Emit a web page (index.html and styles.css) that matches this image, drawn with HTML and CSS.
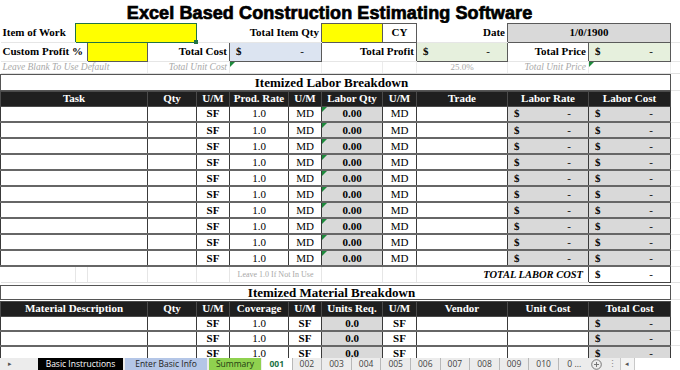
FILE: index.html
```html
<!DOCTYPE html>
<html lang="en">
<head>
  <meta charset="UTF-8">
  <title>Excel Based Construction Estimating Software</title>
  <link rel="stylesheet" href="styles.css">
</head>
<body>
  <div class="sheet">
    <table class="grid">
      <colgroup>
        <col style="width:75px"><col style="width:12px"><col style="width:60px"><col style="width:49px">
        <col style="width:33px"><col style="width:59px"><col style="width:33px"><col style="width:61px">
        <col style="width:34px"><col style="width:91px"><col style="width:81px"><col style="width:82px">
        <col style="width:10px">
      </colgroup>

      <tr class="title-row">
        <td colspan="13" class="title">Excel Based Construction Estimating Software</td>
      </tr>

      <tr class="top-row">
        <td class="lbl">Item of Work</td>
        <td colspan="3" class="yel sel"></td>
        <td colspan="3" class="lbl r">Total Item Qty</td>
        <td class="yel box"></td>
        <td class="box c lbl">CY</td>
        <td class="lbl r">Date</td>
        <td colspan="2" class="box gry c lbl">1/0/1900</td>
        <td class="strip"></td>
      </tr>

      <tr class="top-row">
        <td colspan="2" class="lbl">Custom Profit %</td>
        <td class="yel box"></td>
        <td colspan="2" class="lbl r">Total Cost</td>
        <td colspan="2" class="box blue"><div class="money"><b>$</b><span>-</span></div></td>
        <td colspan="2" class="lbl r">Total Profit</td>
        <td class="box grn"><div class="money"><b>$</b><span>-</span></div></td>
        <td class="lbl r">Total Price</td>
        <td class="box grn"><div class="money"><b>$</b><span>-</span></div></td>
        <td class="strip"></td>
      </tr>

      <tr class="hint-row">
        <td colspan="3" class="hint">Leave Blank To Use Default</td>
        <td colspan="2" class="hint r">Total Unit Cost</td>
        <td colspan="2" class="tri"></td>
        <td></td>
        <td></td>
        <td class="pct c">25.0%</td>
        <td class="hint r">Total Unit Price</td>
        <td class="tri"></td>
        <td class="strip"></td>
      </tr>

      <tr class="gap"><td colspan="13"></td></tr>
      <tr class="section-row">
        <td colspan="12" class="section">Itemized Labor Breakdown</td>
        <td class="strip"></td>
      </tr>
      <tr class="gap"><td colspan="13"></td></tr>

      <tr class="head">
        <td colspan="3">Task</td><td>Qty</td><td>U/M</td><td>Prod. Rate</td><td>U/M</td>
        <td>Labor Qty</td><td>U/M</td><td>Trade</td><td>Labor Rate</td><td>Labor Cost</td>
        <td class="strip"></td>
      </tr>

      <tr class="row">
        <td colspan="3"></td><td></td><td class="b c">SF</td><td class="c">1.0</td><td class="c">MD</td>
        <td class="gry tri b c">0.00</td><td class="c">MD</td><td></td>
        <td class="gry"><div class="money"><b>$</b><span>-</span></div></td>
        <td class="gry"><div class="money"><b>$</b><span>-</span></div></td>
        <td class="strip"></td>
      </tr>
      <tr class="row">
        <td colspan="3"></td><td></td><td class="b c">SF</td><td class="c">1.0</td><td class="c">MD</td>
        <td class="gry tri b c">0.00</td><td class="c">MD</td><td></td>
        <td class="gry"><div class="money"><b>$</b><span>-</span></div></td>
        <td class="gry"><div class="money"><b>$</b><span>-</span></div></td>
        <td class="strip"></td>
      </tr>
      <tr class="row">
        <td colspan="3"></td><td></td><td class="b c">SF</td><td class="c">1.0</td><td class="c">MD</td>
        <td class="gry tri b c">0.00</td><td class="c">MD</td><td></td>
        <td class="gry"><div class="money"><b>$</b><span>-</span></div></td>
        <td class="gry"><div class="money"><b>$</b><span>-</span></div></td>
        <td class="strip"></td>
      </tr>
      <tr class="row">
        <td colspan="3"></td><td></td><td class="b c">SF</td><td class="c">1.0</td><td class="c">MD</td>
        <td class="gry tri b c">0.00</td><td class="c">MD</td><td></td>
        <td class="gry"><div class="money"><b>$</b><span>-</span></div></td>
        <td class="gry"><div class="money"><b>$</b><span>-</span></div></td>
        <td class="strip"></td>
      </tr>
      <tr class="row">
        <td colspan="3"></td><td></td><td class="b c">SF</td><td class="c">1.0</td><td class="c">MD</td>
        <td class="gry tri b c">0.00</td><td class="c">MD</td><td></td>
        <td class="gry"><div class="money"><b>$</b><span>-</span></div></td>
        <td class="gry"><div class="money"><b>$</b><span>-</span></div></td>
        <td class="strip"></td>
      </tr>
      <tr class="row">
        <td colspan="3"></td><td></td><td class="b c">SF</td><td class="c">1.0</td><td class="c">MD</td>
        <td class="gry tri b c">0.00</td><td class="c">MD</td><td></td>
        <td class="gry"><div class="money"><b>$</b><span>-</span></div></td>
        <td class="gry"><div class="money"><b>$</b><span>-</span></div></td>
        <td class="strip"></td>
      </tr>
      <tr class="row">
        <td colspan="3"></td><td></td><td class="b c">SF</td><td class="c">1.0</td><td class="c">MD</td>
        <td class="gry tri b c">0.00</td><td class="c">MD</td><td></td>
        <td class="gry"><div class="money"><b>$</b><span>-</span></div></td>
        <td class="gry"><div class="money"><b>$</b><span>-</span></div></td>
        <td class="strip"></td>
      </tr>
      <tr class="row">
        <td colspan="3"></td><td></td><td class="b c">SF</td><td class="c">1.0</td><td class="c">MD</td>
        <td class="gry tri b c">0.00</td><td class="c">MD</td><td></td>
        <td class="gry"><div class="money"><b>$</b><span>-</span></div></td>
        <td class="gry"><div class="money"><b>$</b><span>-</span></div></td>
        <td class="strip"></td>
      </tr>
      <tr class="row">
        <td colspan="3"></td><td></td><td class="b c">SF</td><td class="c">1.0</td><td class="c">MD</td>
        <td class="gry tri b c">0.00</td><td class="c">MD</td><td></td>
        <td class="gry"><div class="money"><b>$</b><span>-</span></div></td>
        <td class="gry"><div class="money"><b>$</b><span>-</span></div></td>
        <td class="strip"></td>
      </tr>
      <tr class="row">
        <td colspan="3"></td><td></td><td class="b c">SF</td><td class="c">1.0</td><td class="c">MD</td>
        <td class="gry tri b c">0.00</td><td class="c">MD</td><td></td>
        <td class="gry"><div class="money"><b>$</b><span>-</span></div></td>
        <td class="gry"><div class="money"><b>$</b><span>-</span></div></td>
        <td class="strip"></td>
      </tr>

      <tr class="total-row">
        <td></td><td></td><td></td><td></td><td></td>
        <td colspan="2" class="note c">Leave 1.0 If Not In Use</td>
        <td></td><td></td>
        <td colspan="2" class="total-lbl r">TOTAL LABOR COST</td>
        <td class="total-box"><div class="money"><b>$</b><span>-</span></div></td>
        <td class="strip"></td>
      </tr>

      <tr class="gap gap-3"><td colspan="13"></td></tr>
      <tr class="section-row short">
        <td colspan="12" class="section">Itemized Material Breakdown</td>
        <td class="strip"></td>
      </tr>
      <tr class="gap gap-2"><td colspan="13"></td></tr>

      <tr class="head">
        <td colspan="3">Material Description</td><td>Qty</td><td>U/M</td><td>Coverage</td><td>U/M</td>
        <td>Units Req.</td><td>U/M</td><td>Vendor</td><td>Unit Cost</td><td>Total Cost</td>
        <td class="strip"></td>
      </tr>

      <tr class="row mat">
        <td colspan="3"></td><td></td><td class="b c">SF</td><td class="c">1.0</td><td class="b c">SF</td>
        <td class="gry b c">0.0</td><td class="b c">SF</td><td></td><td></td>
        <td class="gry"><div class="money"><b>$</b><span>-</span></div></td>
        <td class="strip"></td>
      </tr>
      <tr class="row mat">
        <td colspan="3"></td><td></td><td class="b c">SF</td><td class="c">1.0</td><td class="b c">SF</td>
        <td class="gry b c">0.0</td><td class="b c">SF</td><td></td><td></td>
        <td class="gry"><div class="money"><b>$</b><span>-</span></div></td>
        <td class="strip"></td>
      </tr>
      <tr class="row mat">
        <td colspan="3"></td><td></td><td class="b c">SF</td><td class="c">1.0</td><td class="b c">SF</td>
        <td class="gry b c">0.0</td><td class="b c">SF</td><td></td><td></td>
        <td class="gry"><div class="money"><b>$</b><span>-</span></div></td>
        <td class="strip"></td>
      </tr>
    </table>
  </div>

  <div class="tabs">
    <span class="nav">&#9656;</span>
    <span class="tab t-black">Basic Instructions</span>
    <span class="tab t-blue">Enter Basic Info</span>
    <span class="tab t-green">Summary</span>
    <span class="tab num active">001</span>
    <span class="tab num">002</span>
    <span class="tab num">003</span>
    <span class="tab num">004</span>
    <span class="tab num">005</span>
    <span class="tab num">006</span>
    <span class="tab num">007</span>
    <span class="tab num">008</span>
    <span class="tab num">009</span>
    <span class="tab num">010</span>
    <span class="tab num more">0 ...</span>
    <span class="add">
      <svg width="11" height="11" viewBox="0 0 11 11">
        <circle cx="5.5" cy="5.5" r="4.8" fill="none" stroke="#6a6a6a" stroke-width="0.9"/>
        <path d="M5.5 3v5M3 5.5h5" stroke="#6a6a6a" stroke-width="0.9"/>
      </svg>
    </span>
    <span class="dots">&#8942;</span>
    <span class="scroll"><span class="arrow">&#9666;</span></span>
  </div>
</body>
</html>
```

FILE: styles.css
```css
* {
  box-sizing: border-box;
}

html, body {
  margin: 0;
}

body {
  width: 680px;
  height: 370px;
  display: flex;
  flex-direction: column;
  overflow: hidden;
  background: #fff;
  font-family: "Liberation Serif", "Times New Roman", serif;
  font-size: 11px;
  color: #000;
}

.sheet {
  flex: 1;
  overflow: hidden;
}

.grid {
  border-collapse: collapse;
  table-layout: fixed;
  width: 680px;
}

.grid td {
  padding: 0 2px;
  white-space: nowrap;
  overflow: hidden;
  vertical-align: middle;
  line-height: 13px;
}

/* title */
.title-row {
  height: 23px;
}

.title {
  font-family: "Liberation Sans", Arial, sans-serif;
  font-size: 18px;
  font-weight: bold;
  letter-spacing: 0.1px;
  -webkit-text-stroke: 0.7px #000;
  text-align: center;
  vertical-align: bottom !important;
  line-height: 20px !important;
  padding-right: 24px !important;
}

/* top info block */
.top-row {
  height: 19px;
}

.top-row td {
  border-bottom: 1px solid #e6e6e6;
}

.lbl {
  font-weight: bold;
}

.r {
  text-align: right;
}

.c {
  text-align: center;
}

.b {
  font-weight: bold;
}

.yel {
  background: #ffff00;
}

.blue {
  background: #dce4f1;
}

.grn {
  background: #e6f0dd;
}

.gry {
  background: #d9d9d9;
}

.grid td.box {
  border: 1px solid #5a5a5a;
}

.grid td.sel {
  position: relative;
  border: 1px solid #217346;
  overflow: visible;
}

.sel::after {
  content: "";
  position: absolute;
  right: -2px;
  bottom: -2px;
  width: 4px;
  height: 4px;
  background: #217346;
}

.money {
  display: flex;
  justify-content: space-between;
  padding: 0 15px 0 4px;
}

.hint-row {
  height: 12px;
}

.hint-row td {
  border-right: 1px solid #ececec;
  border-bottom: 1px solid #e0e0e0;
  line-height: 10px;
}

.hint {
  font-style: italic;
  font-size: 9.5px;
  color: #a8a8a8;
}

.pct {
  font-size: 9px;
  color: #a8a8a8;
}

.grid td.tri {
  position: relative;
  overflow: visible;
}

.tri::before {
  content: "";
  position: absolute;
  top: 0;
  left: 0;
  border-top: 5px solid #1d8a3c;
  border-right: 5px solid transparent;
}

/* section captions */
.gap td {
  height: 1px;
  padding: 0;
  line-height: 0;
}

.gap-2 td {
  height: 2px;
}

.gap-3 td {
  height: 3px;
}

.section-row {
  height: 16px;
}

.section-row.short {
  height: 14px;
}

.grid td.section {
  border: 1px solid #555;
  text-align: center;
  font-size: 13px;
  font-weight: bold;
  padding-right: 10px;
}

/* table header */
.head {
  height: 15px;
}

.head td {
  background: #1f1f1f;
  color: #fff;
  font-weight: bold;
  text-align: center;
  border: 1px solid #4a4a4a;
}

.grid .head td.strip {
  background: #fff;
  border: none;
}

/* data rows */
.row {
  height: 16px;
}

.row.mat {
  height: 14px;
}

.row td {
  border: 1px solid #3a3a3a;
  border-bottom: 2px solid #666;
}

.grid .row td.strip {
  border: none;
  border-bottom: 1px solid #e4e4e4;
}

.strip {
  border-bottom: 1px solid #e6e6e6;
}

.total-row {
  height: 16px;
}

.total-row td {
  border-right: 1px solid #e6e6e6;
  border-bottom: 1px solid #e0e0e0;
}

.note {
  font-size: 8px;
  color: #a8a8a8;
}

.grid td.total-lbl {
  font-weight: bold;
  font-style: italic;
  font-size: 10.5px;
  padding-right: 5px;
  border-right: 1px solid #444;
}

.grid td.total-box {
  border: 1px solid #444;
}

/* sheet tabs */
.tabs {
  height: 12px;
  flex: none;
  display: flex;
  align-items: stretch;
  background: #ececec;
  font-family: "Open Sans", "Noto Sans", sans-serif;
  font-size: 8.5px;
  line-height: 12px;
  color: #444;
}

.nav {
  width: 38px;
  padding-left: 8px;
  font-size: 7px;
  color: #555;
}

.tab {
  text-align: center;
  white-space: nowrap;
}

.t-black {
  width: 85px;
  background: #000;
  color: #fff;
}

.t-blue {
  width: 82px;
  margin-left: 2px;
  background: #b4c6e7;
  color: #222;
}

.t-green {
  width: 52px;
  margin-left: 2px;
  background: #8fd14f;
  color: #1d3a10;
}

.num {
  width: 29.6px;
  border-left: 1px solid #b8b8b8;
}

.active {
  margin-left: 1px;
  background: #fff;
  border-left: none;
  color: #217346;
  font-weight: bold;
}

.more {
  padding-left: 2px;
}

.add {
  width: 18px;
  display: flex;
  align-items: center;
  justify-content: center;
}

.dots {
  width: 14px;
  text-align: center;
  color: #888;
}

.scroll {
  flex: 1;
  display: flex;
  background: #fff;
  border-left: 1px solid #c8c8c8;
}

.arrow {
  width: 14px;
  text-align: center;
  font-size: 7px;
  color: #555;
  border-right: 1px solid #c8c8c8;
  background: #f4f4f4;
}
```
